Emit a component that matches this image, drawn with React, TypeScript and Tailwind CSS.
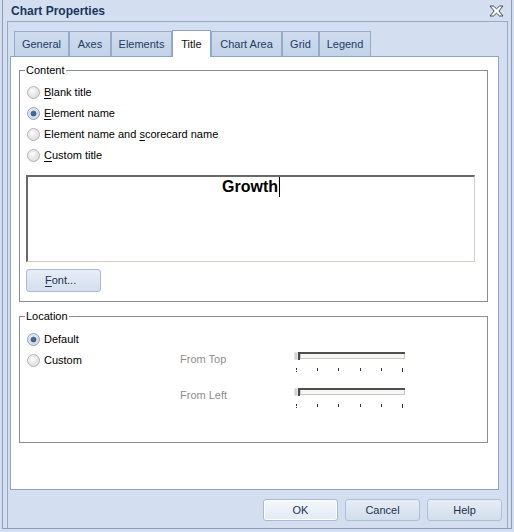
import React from "react";

const font = { fontFamily: '"Liberation Sans", Arial, sans-serif' };

const tabs = [
  { label: "General", w: "w-[55px]" },
  { label: "Axes", w: "w-[42px]" },
  { label: "Elements", w: "w-[61px]" },
  { label: "Title", w: "w-[39px]" },
  { label: "Chart Area", w: "w-[71px]" },
  { label: "Grid", w: "w-[37px]" },
  { label: "Legend", w: "w-[52px]" },
];

function Radio({ checked = false }: { checked?: boolean }) {
  return (
    <svg width="13" height="13" viewBox="0 0 13 13" className="shrink-0">
      <defs>
        <radialGradient id="radioFill" cx="0.4" cy="0.35" r="0.7">
          <stop offset="0" stopColor="#ffffff" />
          <stop offset="1" stopColor="#d6d6d6" />
        </radialGradient>
      </defs>
      <circle cx="6.5" cy="6.5" r="6" fill="url(#radioFill)" stroke={checked ? "#8aa4c8" : "#b4b4b4"} />
      <circle cx="6.5" cy="6.5" r="4.5" fill="none" stroke={checked ? "#c8d6ea" : "#e8e8e8"} />
      {checked && <circle cx="6.5" cy="6.5" r="2.6" fill="#44689a" stroke="#2f4f7e" strokeWidth="0.6" />}
    </svg>
  );
}

function RadioRow({ label, hot, checked }: { label: string; hot?: number; checked?: boolean }) {
  return (
    <div className="flex h-[21px] items-center gap-[4px]">
      <Radio checked={checked} />
      {hot === undefined ? (
        <span className="text-[11px] text-black">{label}</span>
      ) : (
        <span className="text-[11px] text-black">
          {label.slice(0, hot)}
          <span className="underline underline-offset-2">{label[hot]}</span>
          {label.slice(hot + 1)}
        </span>
      )}
    </div>
  );
}

function Slider() {
  return (
    <div className="w-[111px]">
      <div className="flex h-[8px]">
        <div className="w-[4px] h-[8px] bg-[#d2d2d2] border border-[#e6e6e6]" />
        <div className="w-[2px] h-[8px] bg-[#4a4a4a]" />
        <div className="flex-1 flex flex-col">
          <div className="h-[2px] bg-[#4f4f4f]" />
          <div className="h-[5px] border-x border-b border-[#c9c9c1] bg-[#f6f6f4]" />
        </div>
      </div>
      <div className="ml-[2px] mt-[8px] flex w-[107px] justify-between">
        <div className="w-px h-[4px] border-l border-dotted border-[#333]" />
        <div className="w-px h-[3px] bg-[#333]" />
        <div className="w-px h-[3px] bg-[#333]" />
        <div className="w-px h-[3px] bg-[#333]" />
        <div className="w-px h-[3px] bg-[#333]" />
        <div className="w-px h-[4px] bg-[#333]" />
      </div>
    </div>
  );
}

function Button({ label, focused }: { label: string; focused?: boolean }) {
  return (
    <div
      className={
        "flex h-[22px] w-[75px] items-center justify-center rounded-[3px] border text-[11px] text-[#1f3250] " +
        (focused
          ? "border-[#a9bad0] bg-gradient-to-b from-[#f4f8fc] to-[#e2eaf4] shadow-[inset_0_0_0_1px_#ffffff]"
          : "border-[#aebed3] bg-gradient-to-b from-[#e6edf6] to-[#d2deed]")
      }
    >
      {label}
    </div>
  );
}

export default function App() {
  return (
    <div className="w-[514px] h-[532px] bg-[#d3dff0] px-[2px] pb-[3px]" style={font}>
      <div className="flex h-full flex-col border-x border-b border-[#8c9db5]">
        {/* title bar */}
        <div className="flex h-[21px] shrink-0 items-center justify-between pl-[8px] pr-[7px]">
          <span className="text-[12px] font-bold text-[#1b355c]">Chart Properties</span>
          <svg width="15" height="12" viewBox="0 0 15 12">
            <path
              d="M1 1h3.4l3.1 2.8L10.6 1H14L9.9 6 14 11h-3.4L7.5 8.2 4.4 11H1l4.1-5z"
              fill="#ffffff"
              stroke="#3d4c60"
              strokeWidth="1"
              strokeLinejoin="round"
            />
          </svg>
        </div>

        <div className="ml-[4px] mr-[3px] flex flex-1 flex-col border-x border-t border-[#97a9c3] pl-[2px] pt-[8px]">
          {/* tabs */}
          <div className="ml-[4px] flex h-[26px] items-start">
            {tabs.map((t) =>
              t.label === "Title" ? (
                <div
                  key={t.label}
                  className={
                    "relative z-10 flex h-[27px] items-center justify-center border-x border-t border-[#8ea5c6] bg-white text-[11px] text-[#111] " +
                    t.w
                  }
                >
                  {t.label}
                </div>
              ) : (
                <div
                  key={t.label}
                  className={
                    "mt-[1px] flex h-[25px] items-center justify-center border-x border-t border-[#95abc9] bg-gradient-to-b from-[#cfdcee] to-[#c2d2e8] text-[11px] text-[#1f3b63] " +
                    t.w
                  }
                >
                  {t.label}
                </div>
              )
            )}
          </div>

          {/* tab page */}
          <div className="h-[434px] w-[489px] border border-[#8ea5c6] bg-white">
            <fieldset className="ml-[8px] mt-[6px] h-[239px] w-[469px] border border-[#8a8d93]">
              <legend className="ml-[5px] px-[1px] text-[11px] leading-[14px] text-black">Content</legend>
              <div className="ml-[7px] pt-[5px]">
                <RadioRow label="Blank title" hot={0} />
                <RadioRow label="Element name" hot={0} checked />
                <RadioRow label="Element name and scorecard name" hot={17} />
                <RadioRow label="Custom title" hot={0} />
              </div>
              <div className="ml-[6px] mt-[9px] flex h-[87px] w-[449px] justify-center border-l-2 border-t-2 border-r border-b border-l-[#6a6a6a] border-t-[#6a6a6a] border-r-[#d4d0c8] border-b-[#d4d0c8]">
                <span className="text-[16px] font-bold leading-[20px] text-black">Growth</span>
                <span className="ml-[1px] h-[20px] w-px bg-black" />
              </div>
              <div className="ml-[6px] mt-[7px] flex h-[23px] w-[75px] items-center rounded-[3px] border border-[#a9bbd2] bg-gradient-to-b from-[#e8eef7] to-[#d3dfee] pl-[18px] text-[11px] text-[#1f3250]">
                <span className="underline underline-offset-2">F</span>ont...
              </div>
            </fieldset>

            <fieldset className="ml-[8px] mt-[7px] h-[134px] w-[469px] border border-[#8a8d93]">
              <legend className="ml-[5px] px-[1px] text-[11px] leading-[14px] text-black">Location</legend>
              <div className="flex pt-[6px]">
                <div className="ml-[7px] w-[153px]">
                  <RadioRow label="Default" checked />
                  <RadioRow label="Custom" />
                </div>
                <div className="mt-[20px]">
                  <div className="flex h-[36px] items-start">
                    <span className="w-[114px] text-[11px] leading-[21px] text-[#8e8e8e]">From Top</span>
                    <div className="mt-[3px]">
                      <Slider />
                    </div>
                  </div>
                  <div className="flex h-[36px] items-start">
                    <span className="w-[114px] text-[11px] leading-[21px] text-[#8e8e8e]">From Left</span>
                    <div className="mt-[3px]">
                      <Slider />
                    </div>
                  </div>
                </div>
              </div>
            </fieldset>
          </div>

          {/* dialog buttons */}
          <div className="mt-[9px] flex justify-end gap-[7px] pr-[5px]">
            <Button label="OK" focused />
            <Button label="Cancel" />
            <Button label="Help" />
          </div>
        </div>
      </div>
    </div>
  );
}
